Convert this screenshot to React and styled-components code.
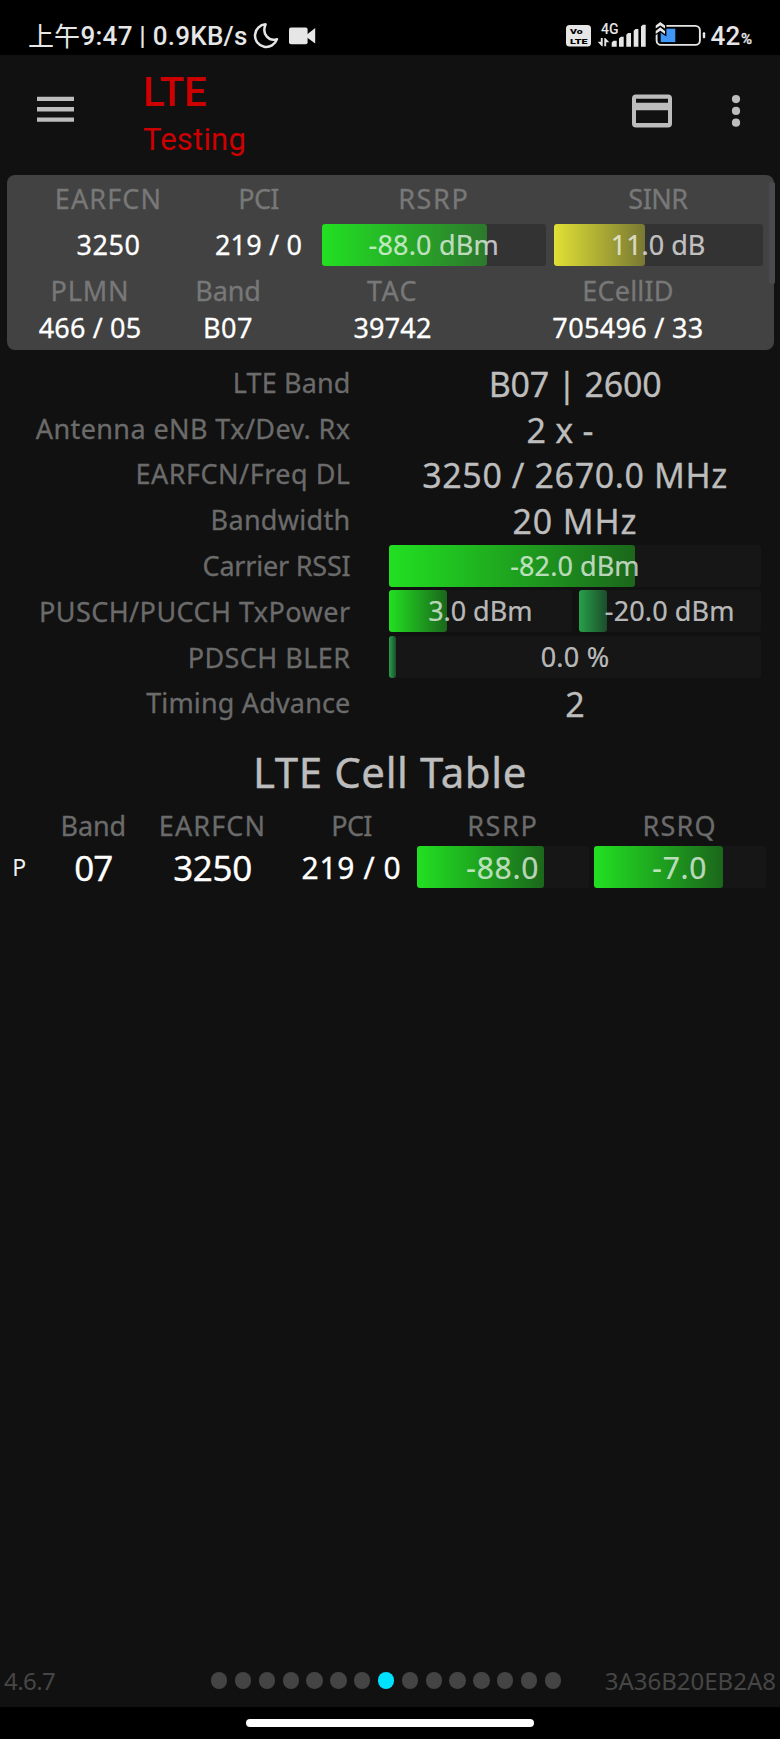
import React from "react";
import styled, { createGlobalStyle } from "styled-components";

const green = "34, 224, 34";
const darkGreen = "39, 160, 74";
const yellow = "224, 224, 53";

const details = [
  { label: "LTE Band", ls: 0.14, value: "B07 | 2600", valueLs: -0.25 },
  {
    label: "Antenna eNB Tx/Dev. Rx",
    ls: 0.4,
    value: "2 x -",
    valueLs: 0.22,
    shift: 30,
  },
  {
    label: "EARFCN/Freq DL",
    ls: 0.5,
    value: "3250 / 2670.0 MHz",
    valueLs: 0.6,
  },
  { label: "Bandwidth", ls: 0.3, value: "20 MHz", valueLs: 0.85 },
  {
    label: "Carrier RSSI",
    ls: -0.21,
    bars: [{ text: "-82.0 dBm", fill: 66.1, color: green, ls: 0.07 }],
  },
  {
    label: "PUSCH/PUCCH TxPower",
    ls: 0.44,
    bars: [
      { text: "3.0 dBm", fill: 31.6, color: green, ls: -0.05 },
      { text: "-20.0 dBm", fill: 15.8, color: darkGreen, ls: 0.13 },
    ],
  },
  {
    label: "PDSCH BLER",
    ls: 0.44,
    bars: [{ text: "0.0 %", fill: 1.9, color: darkGreen, ls: 0.21 }],
  },
  { label: "Timing Advance", ls: 0.16, value: "2", valueLs: 0 },
];

const PAGES = 15;
const ACTIVE_PAGE = 7;

const Meter = ({ text, fill, color, ls, size, track }) => (
  <MeterTrack $track={track}>
    <MeterFill $color={color} style={{ width: `${fill}%` }} />
    <MeterText $ls={ls} $size={size}>
      {text}
    </MeterText>
  </MeterTrack>
);

const VolteIcon = () => (
  <svg width="25" height="37" viewBox="0 0 25 37">
    <rect x="0" y="7" width="25" height="21.5" rx="3.5" fill="#e6e6e6" />
    <g
      fontFamily="Roboto, sans-serif"
      fontWeight="900"
      fontSize="7.6"
      fill="#000"
    >
      <text
        x="4"
        y="16"
        textLength="12.5"
        lengthAdjust="spacingAndGlyphs"
      >
        Vo
      </text>
      <text
        x="4"
        y="25.7"
        textLength="17.5"
        lengthAdjust="spacingAndGlyphs"
      >
        LTE
      </text>
    </g>
  </svg>
);

const SignalIcon = () => (
  <svg width="49" height="37" viewBox="0 0 49 37" fill="#e6e6e6">
    <text
      x="4"
      y="15.7"
      fontSize="15"
      fontFamily="Roboto, sans-serif"
      textLength="17.5"
      lengthAdjust="spacingAndGlyphs"
    >
      4G
    </text>
    <path d="M5.7 20v8.2h-.9L.7 23.7h3.1V20z" />
    <path d="M7.3 28.2V20h.9l4.1 4.3H9.2v3.9z" />
    <path d="M14.7 28.7v-4.2l1.8-1.8h3.2v6z" />
    <path d="M22 28.7v-8.2l1.8-1.8h2.9v10z" />
    <path d="M29.3 28.7V16.8l1.8-1.8H34v13.7z" />
    <path d="M36.7 28.7V12.8l1.8-1.8h2.9v17.7z" />
    <path d="M44 28.7V8.5l1.8-1.8h2.9v22z" />
  </svg>
);

const BatteryIcon = () => (
  <svg width="51" height="37" viewBox="0 0 51 37">
    <rect
      x="1.6"
      y="7.9"
      width="43.3"
      height="19"
      rx="4.5"
      fill="none"
      stroke="#e6e6e6"
      strokeWidth="1.9"
    />
    <rect x="47.8" y="14.3" width="2.4" height="6" rx="1" fill="#e6e6e6" />
    <rect x="5.7" y="10.7" width="14.6" height="13.4" fill="#3f96f5" />
    <path d="M0 3h11.4v15.6l-6.1-4-5.3 3z" fill="#000" />
    <path
      d="M.7 7.6 5.3 4l4.7 3.6v3L5.3 7.4.7 10.6zM.7 12.9l4.6-3.6 4.7 3.6v3l-4.7-3.2-4.6 3.2z"
      fill="#e6e6e6"
    />
  </svg>
);

const MoonIcon = () => (
  <svg width="27" height="37" viewBox="0 0 27 37">
    <path
      d="M13.6 6.3A11.3 11.3 0 1 0 25 21.2C17.5 23.6 9.2 17 13.6 6.3z"
      fill="none"
      stroke="#e6e6e6"
      strokeWidth="2.5"
      strokeLinejoin="round"
    />
  </svg>
);

const CameraIcon = () => (
  <svg width="27" height="37" viewBox="0 0 27 37" fill="#e6e6e6">
    <rect x="0" y="9.6" width="18.6" height="16.6" rx="2" />
    <path d="M18 16.5 26.2 10v15.6L18 19.5z" />
  </svg>
);

const App = () => {
  return (
    <Screen>
      <GlobalStyle />
      <StatusBar>
        <Ampm>上午</Ampm>
        <Clock>9:47 | 0.9KB/s</Clock>
        <MoonIcon />
        <CameraWrap>
          <CameraIcon />
        </CameraWrap>
        <StatusRight>
          <VolteIcon />
          <SignalIcon />
          <BatteryWrap>
            <BatteryIcon />
          </BatteryWrap>
          <Percent>42</Percent>
          <PercentSign>%</PercentSign>
        </StatusRight>
      </StatusBar>

      <AppBar>
        <svg width="38" height="26" viewBox="0 0 38 26" fill="#bdbdbd">
          <path d="M0 .7h37V5H0zM0 11.1h37v4.3H0zM0 21.5h37v4.3H0z" />
        </svg>
        <Titles>
          <AppTitle>LTE</AppTitle>
          <AppSubtitle>Testing</AppSubtitle>
        </Titles>
        <AppBarActions>
          <svg width="41" height="34" viewBox="0 0 41 34">
            <path
              fillRule="evenodd"
              fill="#bdbdbd"
              d="M4 .5h32a4 4 0 0 1 4 4v25a4 4 0 0 1-4 4H4a4 4 0 0 1-4-4v-25a4 4 0 0 1 4-4zM4 4.8v4h32v-4zM4 16.3V29h32V16.300z"
            />
          </svg>
          <svg width="10" height="34" viewBox="0 0 10 34" fill="#bdbdbd">
            <circle cx="5" cy="5.1" r="4.1" />
            <circle cx="5" cy="16.9" r="4.1" />
            <circle cx="5" cy="28.7" r="4.1" />
          </svg>
        </AppBarActions>
      </AppBar>

      <Summary>
        <SummaryTop $height={47}>
          <Label $ls={1.1}>EARFCN</Label>
          <Label $ls={-0.7}>PCI</Label>
          <Label $ls={1.6}>RSRP</Label>
          <Label $ls={-0.5}>SINR</Label>
        </SummaryTop>
        <SummaryTop $height={46}>
          <Value $ls={0.56}>3250</Value>
          <Value $ls={0.18}>219 / 0</Value>
          <Meter
            text="-88.0 dBm"
            fill={73.9}
            color={green}
            ls={0.2}
            track="#333333"
          />
          <Meter
            text="11.0 dB"
            fill={43.9}
            color={yellow}
            ls={-0.03}
            track="#333333"
          />
        </SummaryTop>
        <SummaryBottom $height={44}>
          <Label $ls={0.84}>PLMN</Label>
          <Label $ls={-0.13}>Band</Label>
          <Label $ls={1.4}>TAC</Label>
          <Label $ls={0.19}>ECellID</Label>
        </SummaryBottom>
        <SummaryBottom $height={32}>
          <Value $ls={0.16}>466 / 05</Value>
          <Value $ls={0.5}>B07</Value>
          <Value $ls={0.18}>39742</Value>
          <Value $ls={0.33}>705496 / 33</Value>
        </SummaryBottom>
        <ScrollThumb />
      </Summary>

      <Details>
        {details.map((row) => (
          <DetailRow key={row.label}>
            <DetailLabel $ls={row.ls}>{row.label}</DetailLabel>
            {row.bars ? (
              <Bars>
                {row.bars.map((bar) => (
                  <Meter key={bar.text} {...bar} />
                ))}
              </Bars>
            ) : (
              <DetailValue $ls={row.valueLs} $shift={row.shift}>
                {row.value}
              </DetailValue>
            )}
          </DetailRow>
        ))}
      </Details>

      <TableTitle>LTE Cell Table</TableTitle>
      <TableRow>
        <span />
        <Label $dim $ls={-0.13}>
          Band
        </Label>
        <Label $dim $ls={1.1}>
          EARFCN
        </Label>
        <Label $dim $ls={-0.7}>
          PCI
        </Label>
        <Label $dim $ls={1.6}>
          RSRP
        </Label>
        <Label $dim $ls={1.2}>
          RSRQ
        </Label>
      </TableRow>
      <TableRow>
        <CellKind>P</CellKind>
        <CellValue $size={35} $ls={-1.02}>
          07
        </CellValue>
        <CellValue $size={35} $ls={-0.35}>
          3250
        </CellValue>
        <CellValue $size={30} $ls={0.63}>
          219 / 0
        </CellValue>
        <Meter text="-88.0" fill={73.9} color={green} ls={0.75} size={30} />
        <Meter text="-7.0" fill={75} color={green} ls={0.71} size={30} />
      </TableRow>

      <Footer>
        <FooterText $ls={-0.58}>4.6.7</FooterText>
        <Dots>
          {Array.from({ length: PAGES }, (_, i) => (
            <Dot key={i} $active={i === ACTIVE_PAGE} />
          ))}
        </Dots>
        <FooterText $right>3A36B20EB2A8</FooterText>
      </Footer>
      <NavBar>
        <NavPill />
      </NavBar>
    </Screen>
  );
};

const GlobalStyle = createGlobalStyle`
  body {
    margin: 0;
    background: #111111;
  }
  svg {
    display: block;
    flex: none;
  }
`;

const Screen = styled.div`
  display: flex;
  flex-direction: column;
  width: 780px;
  height: 1739px;
  overflow: hidden;
  background: #111111;
  font-family: "Noto Sans", "Noto Sans CJK TC", sans-serif;
`;

const StatusBar = styled.div`
  display: flex;
  flex: none;
  box-sizing: border-box;
  height: 55px;
  padding: 18px 28px 0 28px;
  background: #000000;
  color: #e6e6e6;
  font-family: Roboto, sans-serif;
  font-size: 26px;
  font-weight: 500;
  line-height: 37px;
  white-space: nowrap;
`;
const Ampm = styled.span`
  width: 52.5px;
  font-family: "Noto Sans CJK TC", sans-serif;
  font-weight: 400;
  line-height: 34px;
`;
const Clock = styled.span`
  width: 171.5px;
  letter-spacing: 0.24px;
`;
const CameraWrap = styled.div`
  margin-left: 10px;
`;
const StatusRight = styled.div`
  display: flex;
  gap: 6px;
  margin-left: auto;
`;
const BatteryWrap = styled.div`
  margin-left: 3px;
`;
const Percent = styled.span`
  margin-left: -1.5px;
  letter-spacing: 0.2px;
`;
const PercentSign = styled.span`
  margin-left: -5.5px;
  padding-top: 3px;
  font-size: 15px;
  -webkit-text-stroke: 0.3px;
`;

const AppBar = styled.div`
  display: flex;
  flex: none;
  align-items: center;
  height: 108px;
  padding-left: 37px;
`;
const Titles = styled.div`
  box-sizing: border-box;
  width: 488px;
  margin-right: 68.5px;
  padding: 14px 0 0 68px;
  color: #cc0000;
  font-family: Roboto, sans-serif;
  line-height: 47px;
`;
const AppTitle = styled.div`
  font-size: 40px;
  font-weight: 500;
`;
const AppSubtitle = styled.div`
  font-size: 31px;
  letter-spacing: 0.2px;
`;
const AppBarActions = styled.div`
  display: flex;
  gap: 58px;
  padding-top: 3px;
`;

const Label = styled.span`
  padding-top: 1.5px;
  color: ${({ $dim }) => ($dim ? "#6b6b6b" : "#787878")};
  font-size: 27px;
  letter-spacing: ${({ $ls }) => $ls || 0}px;
  text-align: center;
  -webkit-text-stroke: 0.3px;
`;
const Value = styled.span`
  color: #ffffff;
  font-size: 27px;
  letter-spacing: ${({ $ls }) => $ls || 0}px;
  text-align: center;
  -webkit-text-stroke: 0.3px;
`;

const MeterTrack = styled.div`
  position: relative;
  flex: 1;
  height: 42px;
  border-radius: 3px;
  background: ${({ $track }) => $track || "#161616"};
`;
const MeterFill = styled.div`
  height: 100%;
  border-radius: 3px;
  background: ${({ $color }) =>
    `linear-gradient(to right, rgb(${$color}), rgba(${$color}, 0.4))`};
`;
const MeterText = styled.span`
  position: absolute;
  inset: 0;
  color: rgba(255, 255, 255, 0.7);
  font-size: ${({ $size }) => $size || 27}px;
  letter-spacing: ${({ $ls }) => $ls || 0}px;
  line-height: ${({ $size }) => ($size ? 44 : 42)}px;
  text-align: center;
  -webkit-text-stroke: 0.2px;
`;

const Summary = styled.div`
  position: relative;
  flex: none;
  box-sizing: border-box;
  height: 174.5px;
  margin: 12px 6.5px 0;
  border-radius: 8px;
  background: #424242;
`;
const SummaryRow = styled.div`
  display: grid;
  align-items: center;
  height: ${({ $height }) => $height}px;
  line-height: 32px;
  white-space: nowrap;
`;
const SummaryTop = styled(SummaryRow)`
  grid-template-columns: 204px 96px 224.5px 209px;

  > :nth-child(3) {
    margin-left: 15px;
    margin-right: -15px;
  }
  > :nth-child(4) {
    margin-left: 22.5px;
    margin-right: -22.5px;
  }
`;
const SummaryBottom = styled(SummaryRow)`
  grid-template-columns: 167px 109px 220px 251px;
`;
const ScrollThumb = styled.div`
  position: absolute;
  top: 7px;
  right: -1px;
  width: 6px;
  height: 102px;
  border-radius: 2px;
  background: #4a4a4f;
`;

const Details = styled.div`
  flex: none;
  padding: 10px 19px 0 0;
`;
const DetailRow = styled.div`
  display: grid;
  grid-template-columns: 350.5px 372px;
  column-gap: 38.5px;
  align-items: center;
  height: 45.8px;
  white-space: nowrap;
`;
const DetailLabel = styled.span`
  padding-top: 1px;
  color: #6b6b6b;
  font-size: 27px;
  letter-spacing: ${({ $ls }) => $ls}px;
  line-height: 36px;
  text-align: right;
  -webkit-text-stroke: 0.3px;
`;
const DetailValue = styled.span`
  padding: 3px ${({ $shift }) => $shift || 0}px 0 0;
  color: #bdbdbd;
  font-size: 34px;
  letter-spacing: ${({ $ls }) => $ls}px;
  line-height: 40px;
  text-align: center;
  -webkit-text-stroke: 0.3px;
`;
const Bars = styled.div`
  display: flex;
  gap: 7px;
`;

const TableTitle = styled.div`
  flex: none;
  margin: 20px 0 6px;
  color: #bdbdbd;
  font-size: 42px;
  letter-spacing: 0.6px;
  line-height: 52px;
  text-align: center;
  -webkit-text-stroke: 0.4px;
`;
const TableRow = styled.div`
  display: grid;
  flex: none;
  grid-template-columns: 48px 90.5px 148px 130px 172.5px 172.5px;
  align-items: center;
  height: 42.4px;
  line-height: 40px;
  white-space: nowrap;

  > :last-child {
    margin-left: 4.5px;
    margin-right: -4.5px;
  }
`;
const CellKind = styled.span`
  padding-right: 9.5px;
  color: #f0f0f0;
  font-size: 23px;
  text-align: center;
`;
const CellValue = styled.span`
  padding-top: 2px;
  color: #ffffff;
  font-size: ${({ $size }) => $size}px;
  letter-spacing: ${({ $ls }) => $ls}px;
  text-align: center;
  -webkit-text-stroke: 0.3px;
`;

const Footer = styled.div`
  display: grid;
  grid-template-columns: 210.5px 1fr 210.5px;
  align-items: center;
  height: 53px;
  margin-top: auto;
  padding: 0 4px;
`;
const FooterText = styled.span`
  color: #464646;
  font-size: 24px;
  letter-spacing: ${({ $ls }) => $ls || 0}px;
  text-align: ${({ $right }) => ($right ? "right" : "left")};
`;
const Dots = styled.div`
  display: flex;
  gap: 7.56px;
  margin-left: -3.5px;
`;
const Dot = styled.span`
  flex: none;
  width: 16.3px;
  height: 16.3px;
  border-radius: 50%;
  background: ${({ $active }) => ($active ? "#00e0ff" : "#444444")};
`;

const NavBar = styled.div`
  display: flex;
  flex: none;
  justify-content: center;
  box-sizing: border-box;
  height: 32px;
  padding-top: 12px;
  background: #000000;
`;
const NavPill = styled.div`
  width: 288px;
  height: 8px;
  border-radius: 4px;
  background: #ffffff;
`;

export default App;
